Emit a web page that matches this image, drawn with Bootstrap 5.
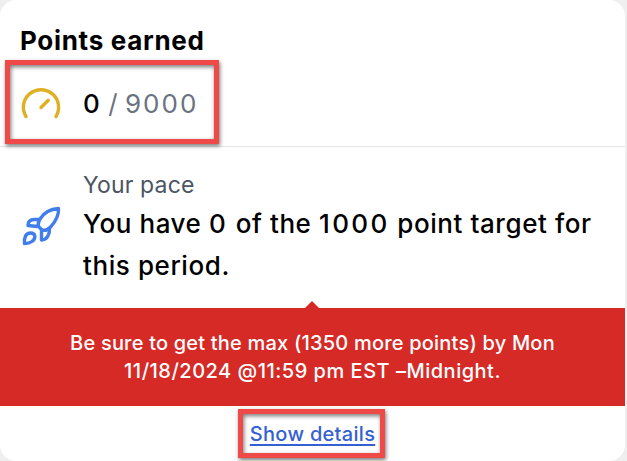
<!DOCTYPE html>
<html lang="en">
<head>
<meta charset="utf-8">
<meta name="viewport" content="width=device-width, initial-scale=1">
<title>Points earned</title>
<link href="https://cdn.jsdelivr.net/npm/bootstrap@5.3.0/dist/css/bootstrap.min.css" rel="stylesheet">
<style>
body{background:#efefef;font-family:Inter,"Liberation Sans",sans-serif;color:#000;width:627px;height:461px;overflow:hidden}
.points-card{width:625px;height:461px;border-radius:16px;background:#fff;overflow:hidden}
.earned{height:147px;padding:20px 20px 0;border-bottom:1px solid #e3e4e6}
.earned h1{font-size:26px;line-height:42px;font-weight:700;letter-spacing:.7px}
.score{height:84px}
.glyph{width:42px;flex:none}
.gap-col{gap:21px}
.score-text{font-size:26px;line-height:42px;color:#6b7280;font-weight:400}
.score-text b{color:#000;font-weight:500;letter-spacing:1.2px}
.score-total{letter-spacing:2px}
.pace{height:161px;padding:20px 20px 0}
.pace-icon{margin-top:38px}
.pace-label{font-size:23px;line-height:36px;color:#4b5563;letter-spacing:.15px}
.pace-text{font-size:26px;line-height:42px;font-weight:500;white-space:nowrap;letter-spacing:.58px}
.figure-wide{letter-spacing:2.4px}
.notice{height:98px;background:#d62a27;color:#fff;font-size:20px;line-height:28px;font-weight:500;padding-top:21px;letter-spacing:.2px}
.notice-date{letter-spacing:.5px}
.notice::before{content:"";position:absolute;left:305px;top:-7px;border:7px solid transparent;border-top:0;border-bottom-color:#d62a27}
.details{height:55px}
.details a{font-size:20px;line-height:28px;color:#3461d1;font-weight:500;letter-spacing:.3px;text-underline-offset:3px;text-decoration-thickness:2px;text-decoration-skip-ink:none}
.frame{position:absolute;border:5px solid #ef4a48;box-shadow:1px 2px 4px #0008,inset 1px 2px 4px #0008}
.frame-score{left:5px;top:60px;width:214px;height:84px}
.frame-link{left:238px;top:409px;width:147px;height:49px}
</style>
</head>
<body>
<main class="points-card position-relative">
<section class="earned">
<h1 class="m-0">Points earned</h1>
<div class="score d-flex align-items-center gap-col">
<svg class="glyph" height="42" viewBox="0 0 42 42" fill="none" stroke="#dfb023" stroke-width="3.4" stroke-linecap="round"><path d="M6 33.5A17.6 17.6 0 1 1 36 33.5M21 24.5L28.3 17.2"/></svg>
<div class="score-text"><b>0</b> / <span class="score-total">9000</span></div>
</div>
</section>
<section class="pace d-flex gap-col">
<svg class="glyph pace-icon" height="42" viewBox="0 0 42 42" fill="none" stroke="#3f7eeb" stroke-width="3.4" stroke-linejoin="round"><path d="M38.500 3.500C31 4 24 7.500 20 14C17 19 18 22 21 24C24 26.500 27 25.500 30.500 22C36 16 39 10 38.500 3.500ZM18.500 14.500H14.500C10 14.500 8 17 8 20.500L17.500 21.500M29.500 23C30 29.500 27 35 21.500 35V25M4.500 38.500C4 32 6 28 10.500 28C16 28 16 33.500 12 36.500C10 38 7 38.500 4.500 38.500Z"/></svg>
<div>
<div class="pace-label">Your pace</div>
<div class="pace-text">You have <span class="figure-wide">0</span> of the <span class="figure-wide">1000</span> point target for<br>this period.</div>
</div>
</section>
<section class="notice position-relative text-center">Be sure to get the max (1350 more points) by Mon<br><span class="notice-date">11/18/2024 @11:59 pm EST –Midnight.</span></section>
<footer class="details d-flex justify-content-center align-items-center"><a href="#">Show details</a></footer>
<div class="frame frame-score"></div>
<div class="frame frame-link"></div>
</main>
<script src="https://cdn.jsdelivr.net/npm/bootstrap@5.3.0/dist/js/bootstrap.bundle.min.js"></script>
</body>
</html>
